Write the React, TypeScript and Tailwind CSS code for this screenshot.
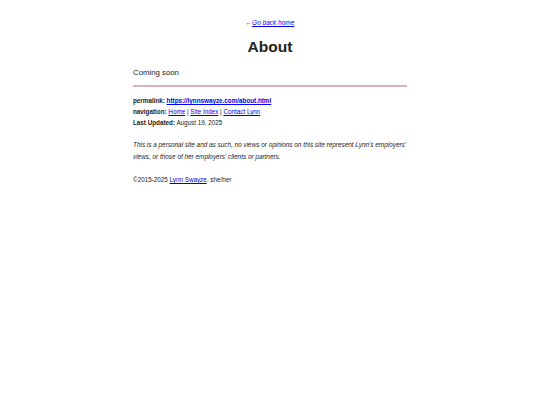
export default function App() {
  return (
    <div
      className="min-h-[405px] bg-white text-[#222]"
      style={{ fontFamily: '"Liberation Sans", Arial, sans-serif' }}
    >
      <div className="mx-auto w-[274px] pt-[18px]">
        <div className="text-center text-[6.5px] leading-[10px]">
          ←<a href="#" className="italic text-[#0000ee] underline">Go back home</a>
        </div>

        <h1 className="mt-[9px] text-center text-[15.5px] font-bold leading-[20px]">About</h1>

        <p className="mt-[10px] text-[7.8px] leading-[11px]">Coming soon</p>

        <hr className="mt-[7px] border-0 border-t-[2px] border-[#ddb3b3]" />

        <div className="mt-[8px] text-[6.3px] leading-[11px]">
          <div>
            <b>permalink:</b>{" "}
            <a href="#" className="font-bold text-[#0000ee] underline">
              https://lynnswayze.com/about.html
            </a>
          </div>
          <div>
            <b>navigation:</b>{" "}
            <a href="#" className="text-[#0000ee] underline">Home</a> |{" "}
            <a href="#" className="text-[#0000ee] underline">Site Index</a> |{" "}
            <a href="#" className="text-[#0000ee] underline">Contact Lynn</a>
          </div>
          <div>
            <b>Last Updated:</b> August 19, 2025
          </div>
        </div>

        <p className="mt-[11px] text-[6.4px] italic leading-[12px]">
          This is a personal site and as such, no views or opinions on this site represent Lynn's employers'
          views, or those of her employers' clients or partners.
        </p>

        <p className="mt-[12px] text-[6.3px] leading-[10px]">
          ©2015-2025 <a href="#" className="text-[#0000ee] underline">Lynn Swayze</a>. she/her
        </p>
      </div>
    </div>
  );
}
